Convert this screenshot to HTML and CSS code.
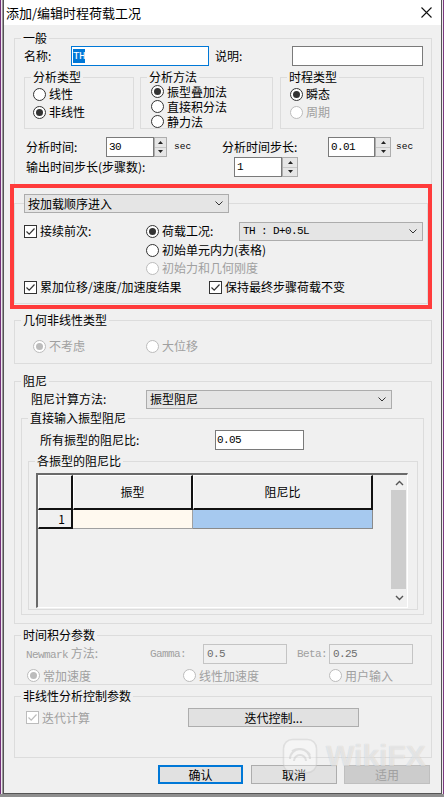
FILE: index.html
```html
<!DOCTYPE html>
<html lang="zh">
<head>
<meta charset="utf-8">
<title>添加/编辑时程荷载工况</title>
<link rel="stylesheet" href="styles.css">
</head>
<body>
<div class="screen">
  <div class="strip strip-l"></div>
  <div class="win">
    <div class="titlebar">
      <span class="title">添加/编辑时程荷载工况</span>
      <svg class="close" width="11" height="11" viewBox="0 0 11 11"><path d="M0.5 0.5L10.5 10.5M10.5 0.5L0.5 10.5" stroke="#111" stroke-width="1.1" fill="none"/></svg>
    </div>
    <div class="content">
      <fieldset class="grp g-general">
        <legend>一般</legend>
        <div class="row r-name">
          <span class="lbl w47">名称:</span>
          <span class="edit focus w138"><span class="sel mono">TH</span></span>
          <span class="lbl w77 ml6">说明:</span>
          <span class="edit w131"></span>
        </div>
        <div class="subs">
          <fieldset class="grp sub s1">
            <legend>分析类型</legend>
            <div class="opts pl8">
              <div class="opt h18"><i class="radio"></i>线性</div>
              <div class="opt h18"><i class="radio on"></i>非线性</div>
            </div>
          </fieldset>
          <fieldset class="grp sub s2">
            <legend>分析方法</legend>
            <div class="opts pl10 up1 tight">
              <div class="opt h15"><i class="radio on"></i>振型叠加法</div>
              <div class="opt h15"><i class="radio"></i>直接积分法</div>
              <div class="opt h15"><i class="radio"></i>静力法</div>
            </div>
          </fieldset>
          <fieldset class="grp sub s3">
            <legend>时程类型</legend>
            <div class="opts pl9">
              <div class="opt h18"><i class="radio on"></i>瞬态</div>
              <div class="opt h18 dis"><i class="radio"></i>周期</div>
            </div>
          </fieldset>
        </div>
        <div class="row r-time">
          <span class="lbl w80">分析时间:</span>
          <span class="spin w61"><span class="ed mono">30</span><span class="btns b13"><span class="sb"><svg width="5" height="3" viewBox="0 0 5 3"><path d="M0 3L2.5 0L5 3Z" fill="#222"/></svg></span><span class="sb"><svg width="5" height="3" viewBox="0 0 5 3"><path d="M0 0L2.5 3L5 0Z" fill="#222"/></svg></span></span></span>
          <span class="unit u1">sec</span>
          <span class="lbl w106">分析时间步长:</span>
          <span class="spin w63"><span class="ed mono">0.01</span><span class="btns b16"><span class="sb"><svg width="5" height="3" viewBox="0 0 5 3"><path d="M0 3L2.5 0L5 3Z" fill="#222"/></svg></span><span class="sb"><svg width="5" height="3" viewBox="0 0 5 3"><path d="M0 0L2.5 3L5 0Z" fill="#222"/></svg></span></span></span>
          <span class="unit u2">sec</span>
        </div>
        <div class="row r-out">
          <span class="lbl w208">输出时间步长(步骤数):</span>
          <span class="spin w64"><span class="ed mono">1</span><span class="btns b16"><span class="sb"><svg width="5" height="3" viewBox="0 0 5 3"><path d="M0 3L2.5 0L5 3Z" fill="#222"/></svg></span><span class="sb"><svg width="5" height="3" viewBox="0 0 5 3"><path d="M0 0L2.5 3L5 0Z" fill="#222"/></svg></span></span></span>
        </div>
      </fieldset>

      <div class="redbox">
        <fieldset class="grp g-seq">
          <legend class="lg-combo"><span class="combo w205"><span class="ctext">按加载顺序进入</span><svg width="8" height="5" viewBox="0 0 8 5"><path d="M0.5 0.5L4 4L7.5 0.5" stroke="#333" fill="none"/></svg></span></legend>
          <div class="seq-top">
            <div class="seq-left">
              <div class="opt h20"><i class="check"><svg width="11" height="11" viewBox="0 0 11 11"><path d="M1.5 5.5L4.2 8.2L9.5 2.5" stroke="#333" stroke-width="1.2" fill="none"/></svg></i>接续前次:</div>
            </div>
            <div class="seq-right">
              <div class="opt h20">
                <span class="optlbl w93"><i class="radio on"></i>荷载工况:</span>
                <span class="combo w184"><span class="ctext mono">TH : D+0.5L</span><svg width="8" height="5" viewBox="0 0 8 5"><path d="M0.5 0.5L4 4L7.5 0.5" stroke="#333" fill="none"/></svg></span>
              </div>
              <div class="opt h18"><i class="radio"></i>初始单元内力(表格)</div>
              <div class="opt h18 dis"><i class="radio"></i>初始力和几何刚度</div>
            </div>
          </div>
          <div class="seq-bottom">
            <div class="opt h18 w185"><i class="check"><svg width="11" height="11" viewBox="0 0 11 11"><path d="M1.5 5.5L4.2 8.2L9.5 2.5" stroke="#333" stroke-width="1.2" fill="none"/></svg></i>累加位移/速度/加速度结果</div>
            <div class="opt h18"><i class="check"><svg width="11" height="11" viewBox="0 0 11 11"><path d="M1.5 5.5L4.2 8.2L9.5 2.5" stroke="#333" stroke-width="1.2" fill="none"/></svg></i>保持最终步骤荷载不变</div>
          </div>
        </fieldset>
      </div>

      <fieldset class="grp g-geo">
        <legend>几何非线性类型</legend>
        <div class="row r-geo">
          <div class="opt h18 dis w113"><i class="radio on"></i>不考虑</div>
          <div class="opt h18 dis"><i class="radio"></i>大位移</div>
        </div>
      </fieldset>

      <fieldset class="grp g-damp">
        <legend>阻尼</legend>
        <div class="row r-dmethod">
          <span class="lbl w115">阻尼计算方法:</span>
          <span class="combo w246 h20"><span class="ctext">振型阻尼</span><svg width="8" height="5" viewBox="0 0 8 5"><path d="M0.5 0.5L4 4L7.5 0.5" stroke="#333" fill="none"/></svg></span>
        </div>
        <fieldset class="grp g-direct">
          <legend>直接输入振型阻尼</legend>
          <div class="row r-all">
            <span class="lbl w175">所有振型的阻尼比:</span>
            <span class="edit w89 h19"><span class="mono">0.05</span></span>
          </div>
          <fieldset class="grp g-each">
            <legend>各振型的阻尼比</legend>
            <div class="grid">
              <div class="gmain">
                <div class="ghead">
                  <span class="hc c0"></span>
                  <span class="hc c1">振型</span>
                  <span class="hc c2">阻尼比</span>
                </div>
                <div class="grow">
                  <span class="rh c0">1</span>
                  <span class="gc c1 cream"></span>
                  <span class="gc c2 blue"></span>
                </div>
              </div>
              <div class="vscroll">
                <span class="sarr"><svg width="9" height="6" viewBox="0 0 9 6"><path d="M1 5L4.5 1.5L8 5" stroke="#555" stroke-width="1.4" fill="none"/></svg></span>
                <span class="thumb"></span>
                <span class="sarr dn"><svg width="9" height="6" viewBox="0 0 9 6"><path d="M1 1L4.5 4.5L8 1" stroke="#555" stroke-width="1.4" fill="none"/></svg></span>
              </div>
            </div>
          </fieldset>
        </fieldset>
      </fieldset>

      <fieldset class="grp g-time">
        <legend>时间积分参数</legend>
        <div class="row r-newmark dis">
          <span class="lbl w124"><span class="mono">Newmark</span> 方法:</span>
          <span class="lbl w53 mono">Gamma:</span>
          <span class="edit dis-edit w84 h19"><span class="mono">0.5</span></span>
          <span class="lbl w32 ml10 mono">Beta:</span>
          <span class="edit dis-edit w84 h19"><span class="mono">0.25</span></span>
        </div>
        <div class="row r-int">
          <div class="opt h17 dis w156"><i class="radio on"></i>常加速度</div>
          <div class="opt h17 dis w146"><i class="radio"></i>线性加速度</div>
          <div class="opt h17 dis"><i class="radio"></i>用户输入</div>
        </div>
      </fieldset>

      <fieldset class="grp g-nl">
        <legend>非线性分析控制参数</legend>
        <div class="row r-iter">
          <div class="opt h19 dis w162"><i class="check"><svg width="11" height="11" viewBox="0 0 11 11"><path d="M1.5 5.5L4.2 8.2L9.5 2.5" stroke="#bcbcbc" stroke-width="1.2" fill="none"/></svg></i>迭代计算</div>
          <span class="btn w171">迭代控制...</span>
        </div>
      </fieldset>

      <div class="row r-buttons">
        <span class="btn default w85">确认</span>
        <span class="btn w86 ml8">取消</span>
        <span class="btn disabled w86 ml7">适用</span>
      </div>
    </div>
  </div>
  <div class="strip strip-r"></div>

  <div class="wm" aria-hidden="true">
    <svg width="36" height="38" viewBox="0 0 36 38"><rect x="1.5" y="2.5" width="33" height="33" rx="9" fill="rgba(255,255,255,0.35)" stroke="rgba(200,200,200,0.45)" stroke-width="1.5"/><path d="M8 22a10 10 0 0 1 20 0M12 24a6 6 0 0 1 12 0M10 14a12 10 0 0 1 18 4" stroke="rgba(200,200,200,0.5)" stroke-width="2" fill="none"/></svg>
    <span class="wm-text">WikiFX</span>
  </div>
</div>
</body>
</html>
```

FILE: styles.css
```css
* { box-sizing: border-box; }
html, body { margin: 0; padding: 0; }
body {
  width: 444px; height: 797px; overflow: hidden;
  background: #8c8c8c;
  font-family: "Noto Sans CJK SC", "Noto Sans", sans-serif;
  font-size: 12px; line-height: 16px; color: #000;
}
.screen { position: relative; display: flex; width: 444px; height: 797px; background: #8f8f8f; }
.strip { height: 794px; }
.strip-l { width: 3px; background: linear-gradient(to right, #74307a 0 1px, #eee8ef 1px 2px, #9a9a9a 2px 3px); }
.strip-r { width: 2px; background: linear-gradient(to right, #f0ecf0 0 1px, #7a3a7e 1px 2px); }
.win {
  width: 439px; height: 794px; background: #f0f0f0;
  border: 1px solid #555; border-top: 0;
  display: flex; flex-direction: column; overflow: hidden;
}
.titlebar { height: 25px; flex: none; background: #fff; display: flex; align-items: center; padding-left: 2px; }
.title { font-size: 13px; }
.close { margin-left: auto; margin-right: 9px; }
.content { padding-left: 10px; }

/* group boxes */
.grp { margin: 0; padding: 0; border: 1px solid #dcdcdc; min-width: 0; }
.grp > legend { padding: 0 2px; margin-left: 6px; height: 16px; line-height: 16px; white-space: nowrap; }
.row { display: flex; align-items: center; }
.lbl { white-space: nowrap; flex: none; }
.opt { display: flex; align-items: center; white-space: nowrap; flex: none; }
.optlbl { display: flex; align-items: center; flex: none; }
.tight .opt { line-height: 14px; }
.dis { color: #a0a0a0; }

/* widths / helpers */
.w32{width:32px}.w47{width:47px}.w53{width:53px}.w61{width:61px}.w63{width:63px}.w64{width:64px}
.w77{width:77px}.w80{width:80px}.w84{width:84px}.w85{width:85px}.w86{width:86px}.w89{width:89px}.w93{width:93px}
.w106{width:106px}.w113{width:113px}.w115{width:115px}.w124{width:124px}.w131{width:131px}.w138{width:138px}
.w146{width:146px}.w156{width:156px}.w162{width:162px}.w171{width:171px}.w175{width:175px}.w184{width:184px}
.w185{width:185px}.w205{width:205px}.w208{width:208px}.w246{width:246px}
.ml5{margin-left:5px}.ml6{margin-left:6px}.ml7{margin-left:7px}.ml8{margin-left:8px}.ml10{margin-left:10px}
.h15{height:15px}.h17{height:17px}.h18{height:18px}.h19{height:19px}.h20{height:20px}
.pl8{padding-left:8px}.pl9{padding-left:9px}.pl10{padding-left:10px}
.up1{margin-top:-1px}

.mono { font-family: "Liberation Mono", monospace; font-size: 11px; letter-spacing: -0.6px; }

/* controls */
.radio {
  position: relative; display: inline-block; flex: none;
  width: 13px; height: 13px; border-radius: 50%;
  border: 1px solid #333; background: #fff; margin-right: 3px;
}
.radio.on::after { content: ""; position: absolute; inset: 2px; border-radius: 50%; background: #333; }
.dis .radio { border-color: #bcbcbc; }
.dis .radio.on::after { background: #bcbcbc; }
.check {
  display: inline-flex; align-items: center; justify-content: center; flex: none;
  width: 13px; height: 13px; border: 1px solid #333; background: #fff; margin-right: 3px;
}
.dis .check { border-color: #bcbcbc; }
.edit { height: 20px; flex: none; background: #fff; border: 1px solid #7a7a7a; display: flex; align-items: center; padding-left: 1px; }
.edit.focus { border-color: #0078d7; }
.edit.dis-edit { background: #f0f0f0; border-color: #c4c4c4; color: #6d6d6d; padding-left: 3px; }
.sel { background: #0078d7; color: #fff; height: 14px; line-height: 14px; }
.spin { display: flex; height: 20px; flex: none; }
.spin .ed { flex: 1; background: #fff; border: 1px solid #7a7a7a; display: flex; align-items: center; padding-left: 2px; }
.btns { display: flex; flex-direction: column; border: 1px solid #adadad; background: #e6e6e6; }
.b13 { width: 13px; } .b16 { width: 16px; }
.sb { flex: 1; display: flex; align-items: center; justify-content: center; }
.sb + .sb { border-top: 1px solid #c8c8c8; }
.unit { font-family: "Liberation Mono", monospace; font-size: 9.5px; flex: none; }
.u1 { margin-left: 7px; width: 48px; }
.u2 { margin-left: 5px; }
.combo {
  height: 19px; flex: none; display: flex; align-items: center;
  background: #e5e5e5; border: 1px solid #acacac; padding: 0 5px 0 3px;
}
.combo .ctext { flex: 1; white-space: nowrap; }
.btn {
  height: 19px; flex: none; display: flex; align-items: center; justify-content: center;
  background: #e1e1e1; border: 1px solid #adadad;
}
.btn.default { border: 2px solid #0078d7; }
.btn.disabled { background: #cccccc; border-color: #bfbfbf; color: #a0a0a0; }

/* 一般 */
.g-general { margin-top: 5px; width: 418px; padding-bottom: 7px; }
.r-name { height: 20px; padding-left: 9px; }
.subs { display: flex; margin-top: 3px; padding-left: 9px; }
.sub { height: 60px; }
.s1 { width: 110px; }
.s2 { width: 133px; margin-left: 6px; }
.s3 { width: 144px; margin-left: 7px; }
.r-time { margin-top: 8px; height: 20px; padding-left: 11px; }
.r-out { height: 20px; padding-left: 11px; }

/* red annotation box */
.redbox {
  margin-top: -1px; margin-left: -4px; width: 422px;
  border: 4px solid #ff3b3b; padding: 6px 0 1px 0;
  position: relative; background: #f0f0f0;
}
.g-seq { width: 414px; padding-bottom: 7px; }
.g-seq > legend.lg-combo { padding: 0; margin-left: 9px; height: 19px; line-height: 16px; }
.seq-top { display: flex; margin-top: 8px; padding-left: 9px; }
.seq-left { width: 122px; flex: none; }
.seq-bottom { display: flex; margin-top: 1px; padding-left: 9px; }

/* 几何非线性 */
.g-geo { margin-top: 3px; width: 418px; padding-bottom: 8px; }
.r-geo { margin-top: 9px; padding-left: 18px; }

/* 阻尼 */
.g-damp { margin-top: 9px; width: 418px; padding-bottom: 8px; }
.r-dmethod { height: 20px; padding-left: 16px; }
.g-direct { margin-top: 1px; margin-left: 6px; width: 403px; padding-bottom: 4px; }
.r-all { margin-top: 4px; height: 19px; padding-left: 18px; }
.g-each { margin-top: 4px; margin-left: 6px; width: 390px; padding-bottom: 1px; }

.grid {
  margin-top: 4px; margin-left: 7px; width: 372px; height: 135px; display: flex;
  border-top: 2px solid #6a6a6a; border-left: 2px solid #6a6a6a;
  border-right: 1px solid #fff; border-bottom: 1px solid #fff; background: #f0f0f0;
}
.gmain { width: 353px; flex: none; }
.ghead { display: flex; height: 35px; }
.hc {
  display: flex; align-items: center; justify-content: center; background: #f0f0f0;
  border-top: 1px solid #fff; border-left: 1px solid #fff;
  border-right: 2px solid #111; border-bottom: 2px solid #111;
}
.c0 { width: 35px; flex: none; } .c1 { width: 120px; flex: none; } .c2 { width: 180px; flex: none; }
.grow { display: flex; height: 19px; }
.rh {
  display: flex; align-items: center; justify-content: flex-end; padding-right: 6px;
  background: #f0f0f0; border-left: 1px solid #fff;
  border-right: 2px solid #111; border-bottom: 2px solid #111;
}
.gc { border-right: 1px solid #a0a0a0; border-bottom: 1px solid #a0a0a0; }
.cream { background: #fff9ef; }
.blue { background: #a6c9ef; border-color: #8a8a8a; }
.vscroll { width: 16px; flex: none; display: flex; flex-direction: column; background: #f0f0f0; }
.sarr { height: 15px; display: flex; align-items: center; justify-content: center; flex: none; }
.sarr.dn { flex: 1; }
.thumb { height: 99px; flex: none; background: #cdcdcd; margin-right: 1px; }

/* 时间积分 */
.g-time { margin-top: 3px; width: 418px; }
.r-newmark { margin-top: 1px; height: 19px; padding-left: 11px; }
.r-int { margin-top: 4px; padding-left: 12px; }

/* 非线性控制 */
.g-nl { margin-top: 3px; width: 418px; padding-bottom: 30px; }
.r-iter { margin-top: 4px; height: 19px; padding-left: 11px; }

.r-buttons { margin-top: 7px; padding-left: 144px; }

/* watermark overlay */
.wm { position: absolute; left: 282px; top: 737px; display: flex; align-items: flex-start; gap: 8px; pointer-events: none; }
.wm-text {
  margin-top: 9px;
  font-family: "Liberation Sans", sans-serif; font-weight: bold; font-size: 30px; line-height: 20px;
  color: rgba(255,255,255,0.55); text-shadow: 0 0 1px rgba(0,0,0,0.18);
}
```
